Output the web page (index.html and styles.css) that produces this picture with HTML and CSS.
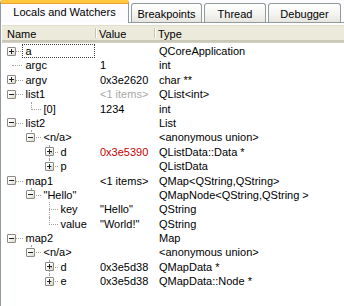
FILE: index.html
```html
<!DOCTYPE html>
<html>
<head>
<meta charset="utf-8">
<link rel="stylesheet" href="styles.css">
</head>
<body>
<div class="win">
  <div class="tabs">
    <div class="tab active t1">Locals and Watchers</div>
    <div class="tab t2">Breakpoints</div>
    <div class="tab t3">Thread</div>
    <div class="tab t4">Debugger</div>
  </div>
  <div class="panel">
    <div class="header">
      <div class="hcol">Name</div>
      <div class="hcol sep">Value</div>
      <div class="hcol sep type">Type</div>
    </div>
    <div class="rows">
      <div class="row"><div class="name l0 focus"><span class="exp plus"></span><span class="label">a</span></div><div class="val"></div><div class="typ">QCoreApplication</div></div>
      <div class="row"><div class="name l0"><span class="hl"></span><span class="label">argc</span></div><div class="val">1</div><div class="typ">int</div></div>
      <div class="row"><div class="name l0"><span class="exp plus"></span><span class="label">argv</span></div><div class="val">0x3e2620</div><div class="typ">char **</div></div>
      <div class="row"><div class="name l0"><span class="exp minus"></span><span class="label">list1</span></div><div class="val gray">&lt;1 items&gt;</div><div class="typ">QList&lt;int&gt;</div></div>
      <div class="row"><div class="name l1"><span class="vl last"></span><span class="hl"></span><span class="label">[0]</span></div><div class="val">1234</div><div class="typ">int</div></div>
      <div class="row"><div class="name l0"><span class="exp minus"></span><span class="label">list2</span></div><div class="val"></div><div class="typ">List</div></div>
      <div class="row"><div class="name l1"><span class="vl last"></span><span class="exp minus"></span><span class="label">&lt;n/a&gt;</span></div><div class="val"></div><div class="typ">&lt;anonymous union&gt;</div></div>
      <div class="row"><div class="name l2"><span class="vl"></span><span class="exp plus"></span><span class="label">d</span></div><div class="val red">0x3e5390</div><div class="typ">QListData::Data *</div></div>
      <div class="row"><div class="name l2"><span class="vl last"></span><span class="exp plus"></span><span class="label">p</span></div><div class="val"></div><div class="typ">QListData</div></div>
      <div class="row"><div class="name l0"><span class="exp minus"></span><span class="label">map1</span></div><div class="val">&lt;1 items&gt;</div><div class="typ">QMap&lt;QString,QString&gt;</div></div>
      <div class="row"><div class="name l1"><span class="vl last"></span><span class="exp minus"></span><span class="label">"Hello"</span></div><div class="val"></div><div class="typ">QMapNode&lt;QString,QString &gt;</div></div>
      <div class="row"><div class="name l2"><span class="vl"></span><span class="hl"></span><span class="label">key</span></div><div class="val">"Hello"</div><div class="typ">QString</div></div>
      <div class="row"><div class="name l2"><span class="vl last"></span><span class="hl"></span><span class="label">value</span></div><div class="val">"World!"</div><div class="typ">QString</div></div>
      <div class="row"><div class="name l0"><span class="exp minus"></span><span class="label">map2</span></div><div class="val"></div><div class="typ">Map</div></div>
      <div class="row"><div class="name l1"><span class="vl last"></span><span class="exp minus"></span><span class="label">&lt;n/a&gt;</span></div><div class="val"></div><div class="typ">&lt;anonymous union&gt;</div></div>
      <div class="row"><div class="name l2"><span class="vl"></span><span class="exp plus"></span><span class="label">d</span></div><div class="val">0x3e5d38</div><div class="typ">QMapData *</div></div>
      <div class="row"><div class="name l2"><span class="vl last"></span><span class="exp plus"></span><span class="label">e</span></div><div class="val">0x3e5d38</div><div class="typ">QMapData::Node *</div></div>
    </div>
  </div>
</div>
</body>
</html>
```

FILE: styles.css
```css
html, body {
  margin: 0;
  padding: 0;
  background: #fcfcfe;
}
body {
  width: 344px;
  height: 306px;
  overflow: hidden;
  font-family: "Liberation Sans", Arial, sans-serif;
  font-size: 11px;
  color: #000;
}
.win {
  display: flex;
  flex-direction: column;
  height: 306px;
}
.tabs {
  display: flex;
  align-items: flex-end;
  height: 22px;
  border-bottom: 1px solid #919b9c;
  position: relative;
  gap: 2px;
}
.tab {
  box-sizing: border-box;
  height: 19px;
  display: flex;
  align-items: center;
  justify-content: center;
  border: 1px solid #919b9c;
  border-bottom: none;
  border-radius: 3px 3px 0 0;
  background: linear-gradient(#ffffff, #f3f3ef 60%, #e6e5de);
  color: #000;
  padding-top: 1px;
}
.tab.active {
  height: 23px;
  margin-bottom: -1px;
  background: #fcfcfe;
  border-top: 3px solid #ffc83c;
  box-shadow: inset 0 1px 0 #f0a030;
  border-radius: 2px 2px 0 0;
  padding-top: 0;
  padding-bottom: 2px;
}
.t1 { width: 129px; }
.t2 { width: 71px; }
.t3 { width: 62px; }
.t4 { width: 73px; }

.panel {
  flex: 1;
  border-left: 1px solid #919b9c;
  display: flex;
  flex-direction: column;
  padding-top: 2px;
  padding-left: 1px;
  background: #fff;
}
.header {
  display: grid;
  grid-template-columns: 93px 59px 1fr;
  height: 17px;
  background: #ebeadb;
  border-bottom: 1px solid #d6d2c2;
  box-shadow: 0 1px 0 #e2decd inset, 0 -2px 0 #cbc7b8 inset;
}
.hcol {
  display: flex;
  align-items: center;
  padding-left: 5px;
  position: relative;
}
.hcol.sep {
  padding-left: 4px;
}
.hcol.type { padding-left: 4px; }
.hcol.sep::before {
  content: "";
  position: absolute;
  left: 0;
  top: 3px;
  bottom: 4px;
  width: 1px;
  background: #c7c5b2;
  box-shadow: 1px 0 0 #fff;
}
.rows {
  display: flex;
  flex-direction: column;
  padding-top: 1px;
}
.row {
  display: grid;
  grid-template-columns: 93px 59px 1fr;
  height: 14.4px;
  line-height: 14.4px;
  white-space: nowrap;
}
.name {
  position: relative;
}
.val { padding-left: 5px; }
.typ { padding-left: 5px; }
.gray { color: #a8a8a8; }
.red { color: #c80000; }

.label {
  position: absolute;
  top: 0;
  left: 22.5px;
  padding: 0 1px;
}
.l1 .label { left: 40.5px; }
.l2 .label { left: 57.5px; }
.focus::after {
  content: "";
  position: absolute;
  left: 20px;
  right: 0;
  top: 0;
  bottom: 0;
  border: 1px dotted #444;
}

/* tree lines */
.hl {
  position: absolute;
  top: 7px;
  left: 9.5px;
  width: 10px;
  height: 0;
  border-top: 1px dotted #a0a0a0;
}
.l1 .hl { left: 28.5px; }
.l2 .hl { left: 47px; width: 9px; }
.vl {
  position: absolute;
  top: 0;
  height: 14.4px;
  width: 0;
  border-left: 1px dotted #a0a0a0;
}
.vl.last { height: 8px; }
.l1 .vl { left: 28.5px; }
.l2 .vl { left: 47px; }
.l1 .vl.last::after, .l2 .vl.last::after { content: none; }

.exp {
  position: absolute;
  top: 2.5px;
  left: 5px;
  width: 9px;
  height: 9px;
  box-sizing: border-box;
  border: 1px solid #8a8a84;
  background: linear-gradient(135deg, #ffffff 30%, #d8d6cc);
  border-radius: 1px;
}
.l1 .exp { left: 24px; }
.l2 .exp { left: 42.5px; }
.exp::before {
  content: "";
  position: absolute;
  left: 1px;
  top: 3px;
  width: 5px;
  height: 1px;
  background: #222;
}
.exp.plus::after {
  content: "";
  position: absolute;
  left: 3px;
  top: 1px;
  width: 1px;
  height: 5px;
  background: #222;
}
.exp + .label::before {
  content: "";
  position: absolute;
  left: -9px;
  top: 7px;
  width: 7px;
  border-top: 1px dotted #a0a0a0;
}
```
